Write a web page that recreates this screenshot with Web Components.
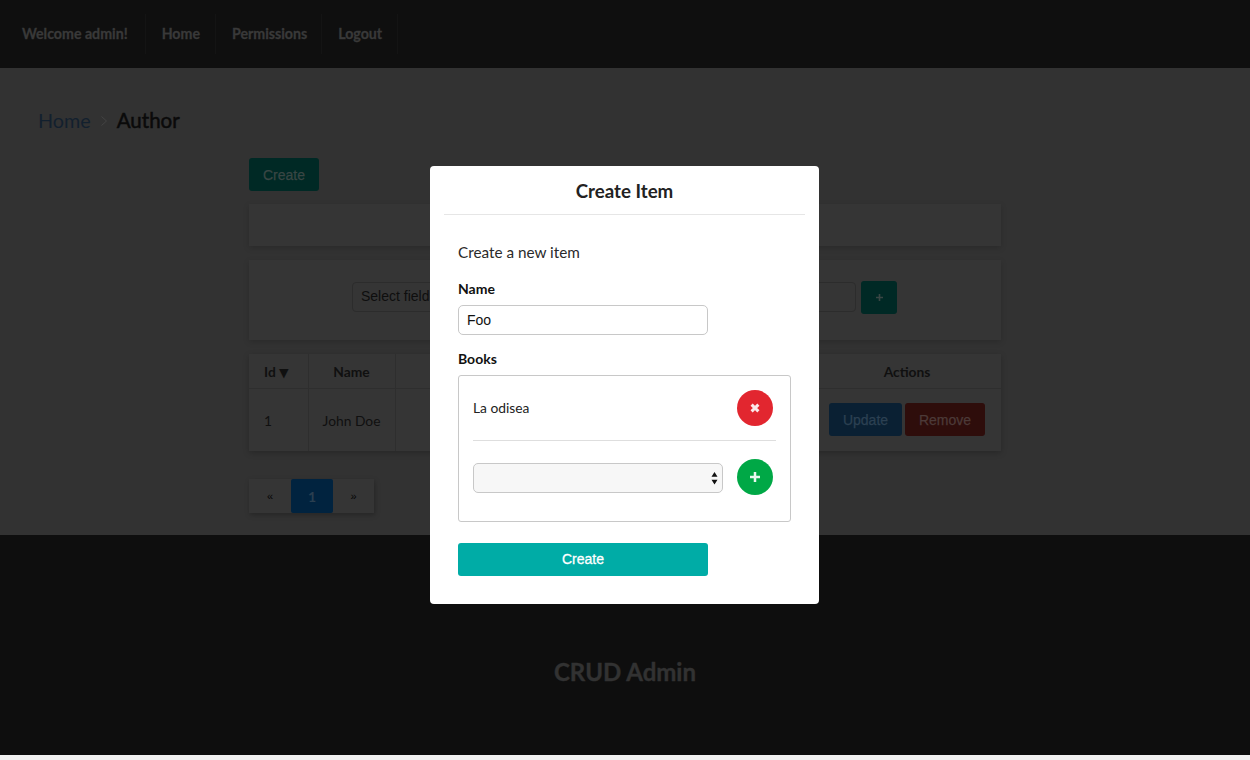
<!DOCTYPE html>
<html>

<head>
    <meta charset="utf-8">
    <title>CRUD Admin</title>
    <style>
        html, body {
            margin: 0;
            height: 760px;
            overflow: hidden;
            background: #f1f1f1;
            font-family: Lato, "Liberation Sans", sans-serif;
        }
    </style>
</head>

<body>
    <crud-page>
        <top-bar></top-bar>
        <page-main>
            <bread-crumb slot="crumb"></bread-crumb>
            <tool-button color="teal" wide>Create</tool-button>
            <dim-panel style="height:42px;margin-top:13px"></dim-panel>
            <filter-bar></filter-bar>
            <item-table></item-table>
            <page-nav></page-nav>
        </page-main>
        <page-footer>CRUD Admin</page-footer>
    </crud-page>
    <create-dialog></create-dialog>

    <template id="crud-page-template">
        <style>
            :host { display: block; height: 755px; }
        </style>
        <slot></slot>
    </template>

    <template id="top-bar-template">
        <style>
            :host {
                display: flex;
                align-items: center;
                height: 68px;
                padding-left: 6px;
                box-sizing: border-box;
                background: #0f0f0f;
                color: #393939;
                font: 700 14.2px Lato, sans-serif;
                -webkit-text-stroke: .3px #393939;
            }
            span {
                height: 40px;
                line-height: 39px;
                padding: 0 15px 0 16px;
                border-right: 1px solid #141414;
            }
            span:first-child { padding-right: 17px; }
            span:nth-child(2) { padding-right: 17px; }
            span:nth-child(3) { padding-right: 15px; }
            span:nth-child(4) { padding-right: 14px; }
        </style>
        <span>Welcome admin!</span>
        <span>Home</span>
        <span>Permissions</span>
        <span>Logout</span>
    </template>

    <template id="page-main-template">
        <style>
            :host {
                display: block;
                height: 467px;
                box-sizing: border-box;
                background: #323232;
                padding: 37px 0 0 38px;
            }
            .content {
                width: 752px;
                margin: 23px 0 0 211px;
            }
        </style>
        <slot name="crumb"></slot>
        <div class="content"><slot></slot></div>
    </template>

    <template id="bread-crumb-template">
        <style>
            :host {
                display: flex;
                align-items: center;
                gap: 9px;
                height: 30px;
                font: 400 19.8px Lato, sans-serif;
                color: #12202e;
            }
            b { font-size: 20.5px; font-weight: 400; color: #0a0a0a; -webkit-text-stroke: .5px #0a0a0a; }
            svg { width: 8px; height: 12px; margin-top: 2px; }
        </style>
        <span>Home</span>
        <svg viewBox="0 0 8 12"><path d="M1.5 1.5 6.5 6 1.5 10.5" fill="none" stroke="#434343" stroke-width="1"/></svg>
        <b>Author</b>
    </template>

    <template id="tool-button-template">
        <style>
            :host {
                display: inline-flex;
                align-items: center;
                justify-content: center;
                box-sizing: border-box;
                height: 33px;
                border-radius: 3px;
                padding: 0 8px;
                font: 14px "Liberation Sans", Arial, sans-serif;
                -webkit-text-stroke: .25px var(--fg);
                background: var(--bg);
                color: var(--fg);
            }
            :host([color="teal"]) { --bg: #002925; --fg: #394644; }
            :host([color="blue"]) { --bg: #0a2033; --fg: #2c4052; }
            :host([color="red"]) { --bg: #2e0d0b; --fg: #4c3a38; }
            :host([wide]) { width: 70px; }
        </style>
        <slot></slot>
    </template>

    <template id="dim-panel-template">
        <style>
            :host {
                display: block;
                box-sizing: border-box;
                background: #353535;
                box-shadow: 0 2px 6px rgba(0, 0, 0, .16);
            }
        </style>
        <slot></slot>
    </template>

    <template id="filter-bar-template">
        <style>
            :host {
                display: flex;
                align-items: center;
                height: 80px;
                margin-top: 14px;
                padding: 0 104px 6px 103px;
                box-sizing: border-box;
                background: #353535;
                box-shadow: 0 2px 6px rgba(0, 0, 0, .16);
            }
            .field {
                box-sizing: border-box;
                height: 30px;
                border: 1px solid #2c2c2c;
                border-radius: 4px;
                background: #353535;
                color: #0e0e0e;
                font: 14px/27px "Liberation Sans", Arial, sans-serif;
                padding: 0 8px;
                white-space: nowrap;
            }
            .select { width: 250px; }
            .input { flex: 1; margin-left: 4px; }
            .add {
                width: 36px;
                height: 33px;
                margin-left: 5px;
                border-radius: 3px;
                background: #002925;
                display: flex;
                align-items: center;
                justify-content: center;
            }
            svg { width: 9px; height: 9px; }
        </style>
        <div class="field select">Select field</div>
        <div class="field input"></div>
        <div class="add"><svg viewBox="0 0 9 9"><path d="M4.5 1v7M1 4.5h7" stroke="#394644" stroke-width="1.6" fill="none"/></svg></div>
    </template>

    <template id="item-table-template">
        <style>
            :host {
                display: block;
                margin-top: 14px;
                background: #353535;
                box-shadow: 0 2px 6px rgba(0, 0, 0, .22);
            }
            table {
                width: 752px;
                table-layout: fixed;
                border-collapse: collapse;
                font: 13.8px Lato, sans-serif;
                color: #101010;
            }
            th {
                height: 34px;
                padding: 0;
                font-weight: 700;
                text-align: center;
                border-bottom: 1px solid #2e2e2e;
            }
            td {
                height: 62px;
                padding: 0;
                text-align: center;
            }
            th + th, td + td { border-left: 1px solid #2e2e2e; }
            th.id, td.id { padding-left: 15px; text-align: left; }
            th:last-child, td:last-child { border-left: 0; }
            .arrow { font: 12.5px "DejaVu Sans", sans-serif; }
            .acts { display: flex; justify-content: flex-end; gap: 3px; padding-right: 16px; margin-top: -1px; }
            tool-button[color="blue"] { width: 73px; }
            tool-button[color="red"] { width: 80px; }
        </style>
        <table>
            <colgroup><col style="width:59px"><col style="width:87px"><col style="width:418px"><col style="width:188px"></colgroup>
            <tr><th class="id">Id <span class="arrow">▼</span></th><th>Name</th><th></th><th>Actions</th></tr>
            <tr>
                <td class="id">1</td><td>John Doe</td><td></td>
                <td><div class="acts"><tool-button color="blue">Update</tool-button><tool-button color="red">Remove</tool-button></div></td>
            </tr>
        </table>
    </template>

    <template id="page-nav-template">
        <style>
            :host {
                display: inline-flex;
                align-items: stretch;
                height: 34px;
                margin: 28px 0 0 0;
                background: #353535;
                box-shadow: 1px 2px 5px rgba(0, 0, 0, .25);
                color: #050505;
                font: 11px "Liberation Sans", sans-serif;
            }
            span {
                width: 42px;
                display: flex;
                align-items: center;
                justify-content: center;
            }
            .on {
                background: #01233f;
                color: #2a3f50;
                font: 700 14px Lato, sans-serif;
                border-radius: 2px;
            }
        </style>
        <span>«</span><span class="on">1</span><span style="width:41px">»</span>
    </template>

    <template id="page-footer-template">
        <style>
            :host {
                display: flex;
                align-items: center;
                justify-content: center;
                height: 220px;
                padding-top: 52px;
                box-sizing: border-box;
                background: #0e0e0e;
                color: #323232;
                font: 700 24px Lato, sans-serif;
                -webkit-text-stroke: .4px #323232;
            }
        </style>
        <slot></slot>
    </template>

    <template id="round-button-template">
        <style>
            :host {
                display: flex;
                align-items: center;
                justify-content: center;
                flex: none;
                width: 36px;
                height: 36px;
                border-radius: 50%;
                background: var(--round-bg);
            }
            :host([kind="remove"]) { --round-bg: #e2262f; }
            :host([kind="add"]) { --round-bg: #00a846; }
            svg { width: 12px; height: 12px; }
        </style>
        <svg viewBox="0 0 12 12"><path id="glyph" fill="none" stroke-linecap="butt"/></svg>
    </template>

    <template id="create-dialog-template">
        <style>
            :host {
                position: absolute;
                left: 0;
                top: 0;
                width: 1250px;
                height: 755px;
                display: block;
                color: #222;
                font: 14px Lato, sans-serif;
            }
            .modal {
                position: absolute;
                left: 430px;
                top: 166px;
                width: 389px;
                height: 438px;
                box-sizing: border-box;
                background: #fff;
                border-radius: 4px;
                padding: 0 14px;
            }
            h2 {
                margin: 0;
                height: 48px;
                line-height: 50px;
                text-align: center;
                font-size: 18.7px;
                font-weight: 700;
                color: #222;
                border-bottom: 1px solid #e6e6e6;
            }
            .body { padding: 0 14px; }
            p { margin: 28px 0 0; font-size: 15.3px; line-height: 19px; color: #2a2a2a; }
            label {
                display: block;
                font-weight: 700;
                color: #111;
                line-height: 18px;
            }
            .name-label { margin-top: 18px; }
            .books-label { margin-top: 15px; }
            input {
                display: block;
                box-sizing: border-box;
                width: 250px;
                height: 30px;
                margin-top: 7px;
                padding: 0 8px;
                border: 1px solid #c8c8c8;
                border-radius: 5px;
                font: 14px "Liberation Sans", Arial, sans-serif;
                color: #111;
                outline: 0;
            }
            .books {
                box-sizing: border-box;
                width: 333px;
                height: 147px;
                margin-top: 7px;
                padding: 14px 14px 0;
                border: 1px solid #c8c8c8;
                border-radius: 3px;
            }
            .row {
                display: flex;
                align-items: center;
                justify-content: space-between;
                padding-right: 3px;
            }
            .first {
                height: 36px;
                padding-bottom: 14px;
                border-bottom: 1px solid #dedede;
            }
            .second { margin-top: 18px; }
            .first span { font-size: 13.8px; color: #222; margin-top: -2px; }
            .pick { position: relative; width: 250px; height: 30px; margin-top: 2px; }
            select {
                display: block;
                width: 250px;
                height: 30px;
                box-sizing: border-box;
                appearance: none;
                border: 1px solid #c8c8c8;
                border-radius: 5px;
                background: #f7f7f7;
            }
            .pick svg {
                position: absolute;
                right: 5px;
                top: 8px;
                width: 7px;
                height: 14px;
            }
            .submit {
                display: flex;
                align-items: center;
                justify-content: center;
                box-sizing: border-box;
                width: 250px;
                height: 33px;
                padding-bottom: 1px;
                margin-top: 21px;
                border-radius: 3px;
                background: #00aca6;
                color: #fff;
                font: 14px "Liberation Sans", Arial, sans-serif;
                -webkit-text-stroke: .3px #fff;
            }
        </style>
        <div class="modal">
            <h2>Create Item</h2>
            <div class="body">
                <p>Create a new item</p>
                <label class="name-label">Name</label>
                <input value="Foo">
                <label class="books-label">Books</label>
                <div class="books">
                    <div class="row first"><span>La odisea</span><round-button kind="remove"></round-button></div>
                    <div class="row second">
                        <div class="pick">
                            <select></select>
                            <svg viewBox="0 0 7 14"><path d="M3.5 1 6.5 5.8H.5zM3.5 13.5 6.5 8.7H.5z" fill="#111"/></svg>
                        </div>
                        <round-button kind="add"></round-button>
                    </div>
                </div>
                <div class="submit">Create</div>
            </div>
        </div>
    </template>

    <script type="text/javascript">

        // every element here just clones its own template into an open shadow root
        function simpleElement(tag, onReady) {
            class SimpleElement extends HTMLElement {
                constructor() {
                    super();
                    let shadowRoot = this.attachShadow({ mode: 'open' });
                    let templateReference = document.querySelector('#' + tag + '-template');
                    shadowRoot.appendChild(templateReference.content.cloneNode(true));
                }
                connectedCallback() {
                    if (onReady) onReady(this);
                }
            }
            customElements.define(tag, SimpleElement);
        }

        simpleElement('crud-page');
        simpleElement('top-bar');
        simpleElement('page-main');
        simpleElement('bread-crumb');
        simpleElement('tool-button');
        simpleElement('dim-panel');
        simpleElement('filter-bar');
        simpleElement('item-table');
        simpleElement('page-nav');
        simpleElement('page-footer');
        simpleElement('create-dialog');

        // round button draws a cross or a plus depending on kind
        simpleElement('round-button', function (el) {
            let glyph = el.shadowRoot.querySelector('#glyph');
            if (el.getAttribute('kind') === 'remove') {
                glyph.setAttribute('d', 'M2.6 2.6l6.8 6.8M9.4 2.6l-6.8 6.8');
                glyph.setAttribute('stroke', '#fbe9ea');
                glyph.setAttribute('stroke-width', '3');
            } else {
                glyph.setAttribute('d', 'M6 1v10M1 6h10');
                glyph.setAttribute('stroke', '#eaf8f0');
                glyph.setAttribute('stroke-width', '2.5');
            }
        });

    </script>
</body>
</html>
